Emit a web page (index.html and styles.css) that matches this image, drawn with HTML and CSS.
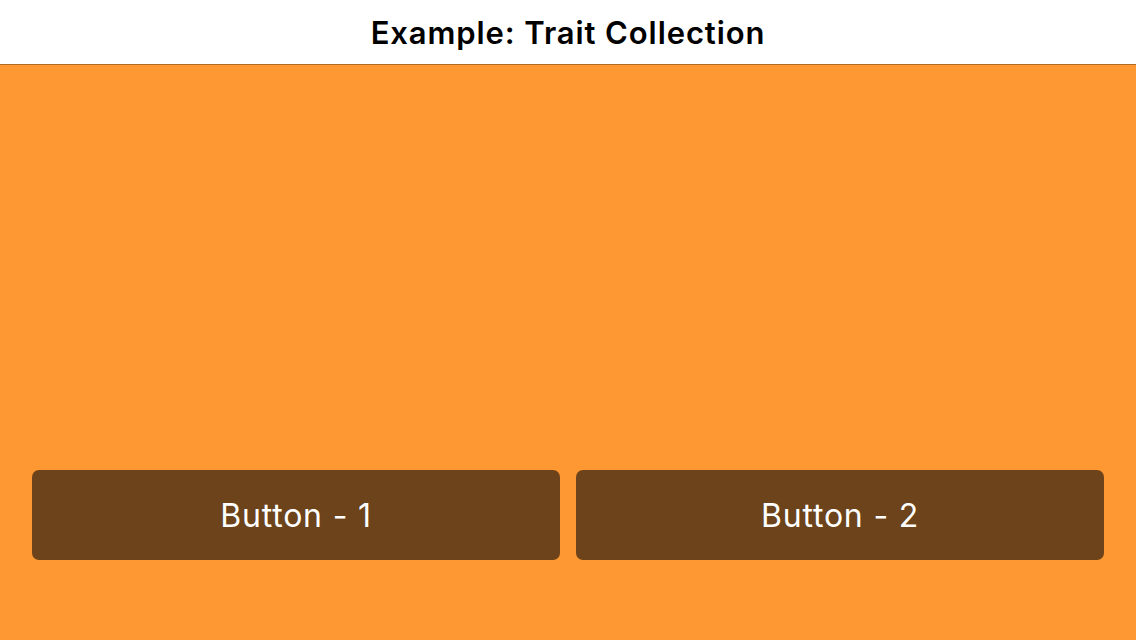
FILE: index.html
```html
<!DOCTYPE html>
<html>
<head>
<meta charset="utf-8">
<link rel="stylesheet" href="styles.css">
</head>
<body>
<header class="navbar"><h1 class="title">Example: Trait Collection</h1></header>
<main class="content">
  <div class="buttons">
    <button class="btn">Button - 1</button>
    <button class="btn">Button - 2</button>
  </div>
</main>
</body>
</html>
```
FILE: styles.css
```css
html, body { margin: 0; padding: 0; height: 100%; }
body {
  display: flex;
  flex-direction: column;
  font-family: Inter, "Liberation Sans", sans-serif;
  background: #fe9833;
}
.navbar {
  height: 65px;
  flex-shrink: 0;
  box-sizing: border-box;
  background: #ffffff;
  border-bottom: 1px solid #b06a22;
  display: flex;
  align-items: center;
  justify-content: center;
}
.title {
  margin: 0;
  font-size: 31px;
  font-weight: 600;
  color: #000;
  letter-spacing: 0.9px;
  line-height: 1;
}
.content {
  flex: 1;
  display: flex;
  flex-direction: column;
  justify-content: flex-end;
  padding: 0 32px 80px;
}
.buttons {
  display: flex;
  gap: 16px;
}
.btn {
  flex: 1;
  height: 90px;
  border: none;
  border-radius: 7px;
  background: #6c431a;
  color: #fff;
  font-family: Inter, "Liberation Sans", sans-serif;
  font-size: 32px;
  font-weight: 400;
  letter-spacing: 0.8px;
  padding: 0;
}
```
